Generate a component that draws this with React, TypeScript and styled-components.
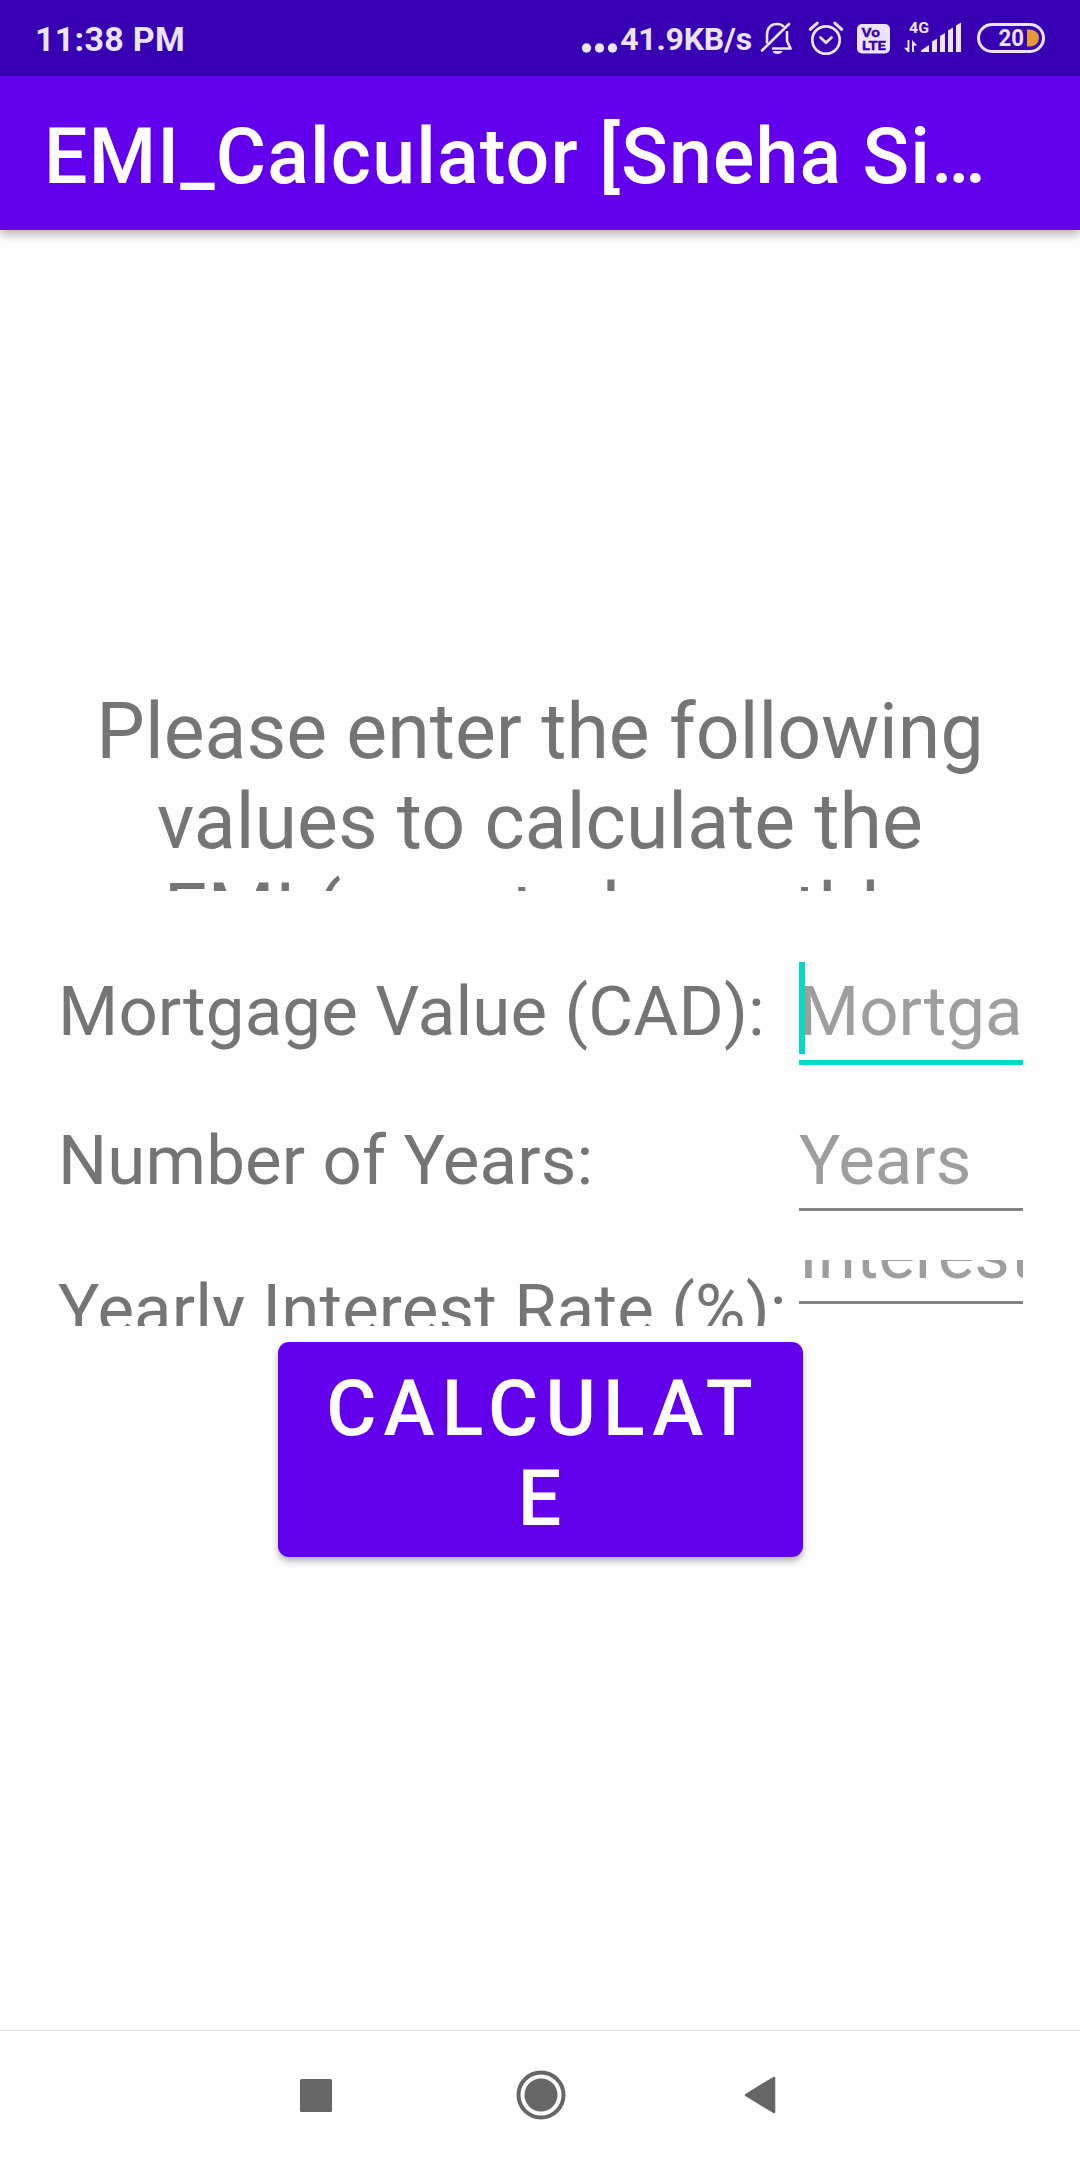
import React from "react";
import styled, { createGlobalStyle } from "styled-components";

const GlobalStyle = createGlobalStyle`
  * { box-sizing: border-box; }
  body { margin: 0; background: #fefefe; }
  svg { display: block; flex: none; }
`;

const statusInk = "#ebe3f8";

const Screen = styled.div`
  width: 1080px;
  height: 2160px;
  display: flex;
  flex-direction: column;
  overflow: hidden;
  background: #fefefe;
  font-family: Roboto, "Liberation Sans", sans-serif;
`;

const StatusBar = styled.div`
  flex: none;
  height: 76px;
  padding: 0 35px;
  display: flex;
  align-items: center;
  justify-content: space-between;
  background: #3700b3;
  color: ${statusInk};
`;

const Clock = styled.span`
  padding-top: 2px;
  font-size: 34px;
  font-weight: 700;
  line-height: 40px;
  letter-spacing: 0.3px;
  white-space: nowrap;
`;

const StatusIcons = styled.div`
  display: flex;
  align-items: center;
  height: 76px;
`;

const Speed = styled.span`
  padding-top: 1px;
  font-size: 32px;
  font-weight: 700;
  line-height: 38px;
  letter-spacing: -0.2px;
  white-space: nowrap;
  margin-right: 8px;
`;

const AppBar = styled.header`
  flex: none;
  height: 154px;
  padding: 0 40px 0 44px;
  display: flex;
  align-items: center;
  background: #6200ee;
  box-shadow: 0 5px 9px rgba(0, 0, 0, 0.28);
`;

const Title = styled.h1`
  margin: 8px 0 0;
  font-size: 77px;
  font-weight: 500;
  line-height: 90px;
  letter-spacing: 1.18px;
  color: #fff;
  white-space: nowrap;
`;

const Content = styled.main`
  flex: 1;
  min-height: 0;
  display: flex;
  flex-direction: column;
  align-items: center;
  padding-top: 455px;
`;

const Prompt = styled.p`
  flex: none;
  margin: 0;
  padding-top: 2px;
  width: 904px;
  height: 206px;
  overflow: hidden;
  font-size: 77px;
  line-height: 90px;
  letter-spacing: 0.05px;
  text-align: center;
  color: #757575;
`;

const Form = styled.div`
  flex: none;
  width: 1080px;
  height: 435px;
  padding: 59px 57px 0 58px;
  overflow: hidden;
`;

const Row = styled.div`
  display: flex;
  justify-content: space-between;
  height: 149px;
`;

const Label = styled.label`
  padding-top: 21px;
  font-size: 69px;
  line-height: 81px;
  letter-spacing: 0.14px;
  color: #757575;
  white-space: nowrap;
`;

const Field = styled.div<{ $active?: boolean; $short?: boolean }>`
  flex: none;
  width: 224px;
  display: flex;
  flex-direction: column;
  height: ${(p) => (p.$short ? 56 : p.$active ? 115 : 112)}px;
  padding-top: ${(p) => (p.$short ? 12 : 0)}px;
  border-bottom: ${(p) => (p.$active ? "5px solid #03dac5" : "3px solid #858585")};
`;

const HintClip = styled.div<{ $short?: boolean }>`
  position: relative;
  flex: 1;
  min-height: 0;
  overflow: hidden;
  display: flex;
  align-items: ${(p) => (p.$short ? "flex-end" : "flex-start")};
  padding: ${(p) => (p.$short ? "0 0 6px" : "21px 0 0")};
`;

const Hint = styled.span`
  flex: none;
  font-size: 69px;
  line-height: 81px;
  color: #9e9e9e;
  white-space: nowrap;
`;

const Caret = styled.i`
  position: absolute;
  left: 0;
  top: 12px;
  width: 6px;
  height: 92px;
  background: #03dac5;
`;

const CalculateButton = styled.button`
  flex: none;
  width: 525px;
  height: 215px;
  margin: 16px 0 0;
  padding: 9px 40px 0 46px;
  border: 0;
  border-radius: 11px;
  background: #6200ee;
  color: #fff;
  font-family: inherit;
  font-size: 77px;
  font-weight: 500;
  line-height: 90px;
  letter-spacing: 7.1px;
  text-align: center;
  word-break: break-all;
  box-shadow: 0 4px 7px rgba(0, 0, 0, 0.3);
`;

const NavBar = styled.nav`
  flex: none;
  height: 130px;
  padding: 0 304px 1px 300px;
  border-top: 1px solid #e2e2e2;
  display: flex;
  align-items: center;
  justify-content: space-between;
`;

const HomeButton = styled.span`
  padding-left: 5px;
`;

const MutedBell = () => (
  <svg width="34" height="36" viewBox="0 0 34 36" fill="none" stroke={statusInk} strokeWidth="2.600">
    <path d="M7 23.500V15C7 8 11 4 17 4c3 0 5.500 1 7 3M27 11v10l3.600 7.500H12" strokeLinejoin="round" />
    <path d="M2 30.500 29 4" strokeLinecap="round" />
    <path d="M12.500 31h10c-1 4-9 4-10 0z" fill={statusInk} stroke="none" />
  </svg>
);

const Alarm = () => (
  <svg width="38" height="38" viewBox="0 0 38 38" fill="none" stroke={statusInk} strokeWidth="2.700">
    <circle cx="19" cy="21" r="13.700" />
    <path d="m13.500 18.500 5.500 5.200 5.500-5.200" strokeLinecap="round" strokeLinejoin="round" />
    <path d="m3.200 10.300 7-6.200M27.800 4.100l7 6.200" strokeLinecap="round" strokeWidth="3" />
  </svg>
);

const VoLte = () => (
  <svg width="33" height="30" viewBox="0 0 33 30">
    <rect width="33" height="29.500" rx="5" fill={statusInk} />
    <g fill="#3700b3" stroke="#3700b3" strokeWidth="0.300" fontFamily="Roboto, sans-serif" fontWeight="700">
      <text x="4.500" y="12.800" fontSize="12.500" textLength="18.500" lengthAdjust="spacingAndGlyphs">Vo</text>
      <text x="5" y="26" fontSize="12.800" textLength="24" lengthAdjust="spacingAndGlyphs">LTE</text>
    </g>
  </svg>
);

const Signal = () => (
  <svg width="58" height="34" viewBox="0 0 58 34" fill={statusInk} overflow="visible">
    <text x="5" y="12" fontSize="15.500" fontWeight="700" fontFamily="Roboto, sans-serif" textLength="20" lengthAdjust="spacingAndGlyphs">4G</text>
    <path d="M3.500 19h1.900v12H3.800L0 26.800h3.500zM8 31V19l4.500 4.500v1.300H9.900V31z" />
    <path d="m17 29.500 8-5.500v7h-8zM28 20.500l5-3V31h-5zM36 15l5-3v19h-5zM44 9.500l5-3V31h-5zM52 4.500l5-3V31h-5z" />
  </svg>
);

const Battery = () => (
  <svg width="68" height="30" viewBox="0 0 68 30">
    <rect x="1.500" y="1.500" width="65" height="27" rx="13.500" fill="none" stroke={statusInk} strokeWidth="3" />
    <path d="M50 6.500h2.500c5 0 9.500 3.500 9.500 8.500s-4.500 8.500-9.500 8.500H50z" fill="#e59a35" />
    <text x="21.500" y="23.200" fontSize="23.500" fontWeight="700" fill={statusInk} fontFamily="Roboto, sans-serif" textLength="25.500" lengthAdjust="spacingAndGlyphs">20</text>
  </svg>
);

const Dots = () => (
  <svg width="38" height="12" viewBox="0 0 38 12" fill={statusInk}>
    <circle cx="5.500" cy="6" r="4.700" />
    <circle cx="18.500" cy="6" r="4.700" />
    <circle cx="31.500" cy="6" r="4.700" />
  </svg>
);

const Slot = styled.span<{ $gap?: number; $down?: number }>`
  display: flex;
  margin-right: ${(p) => p.$gap ?? 0}px;
  padding-top: ${(p) => p.$down ?? 0}px;
`;

interface InputProps {
  hint: string;
  active?: boolean;
  short?: boolean;
}

const Input = ({ hint, active, short }: InputProps) => (
  <Field $active={active} $short={short}>
    <HintClip $short={short}>
      {active && <Caret />}
      <Hint>{hint}</Hint>
    </HintClip>
  </Field>
);

export default function App() {
  return (
    <Screen>
      <GlobalStyle />
      <StatusBar>
        <Clock>11:38 PM</Clock>
        <StatusIcons>
          <Slot $gap={1} $down={19}><Dots /></Slot>
          <Speed>41.9KB/s</Speed>
          <Slot $gap={13}><MutedBell /></Slot>
          <Slot $gap={12}><Alarm /></Slot>
          <Slot $gap={14} $down={1}><VoLte /></Slot>
          <Slot $gap={15}><Signal /></Slot>
          <Slot><Battery /></Slot>
        </StatusIcons>
      </StatusBar>
      <AppBar>
        <Title>EMI_Calculator [Sneha Si…</Title>
      </AppBar>
      <Content>
        <Prompt>Please enter the following values to calculate the EMI (equated monthly</Prompt>
        <Form>
          <Row>
            <Label>Mortgage Value (CAD):</Label>
            <Input hint="Mortga" active />
          </Row>
          <Row>
            <Label>Number of Years:</Label>
            <Input hint="Years" />
          </Row>
          <Row>
            <Label>Yearly Interest Rate (%):</Label>
            <Input hint="Interest" short />
          </Row>
        </Form>
        <CalculateButton>CALCULATE</CalculateButton>
      </Content>
      <NavBar>
        <svg width="32" height="33" viewBox="0 0 32 33"><rect width="32" height="33" rx="1.500" fill="#666" /></svg>
        <HomeButton>
          <svg width="50" height="50" viewBox="0 0 50 50">
            <circle cx="25" cy="25" r="22.500" fill="none" stroke="#666" strokeWidth="4" />
            <circle cx="25" cy="25" r="16.500" fill="#666" />
          </svg>
        </HomeButton>
        <svg width="32" height="38" viewBox="0 0 32 38">
          <path d="M2 19 30 2v34z" fill="#666" stroke="#666" strokeWidth="2.500" strokeLinejoin="round" />
        </svg>
      </NavBar>
    </Screen>
  );
}
